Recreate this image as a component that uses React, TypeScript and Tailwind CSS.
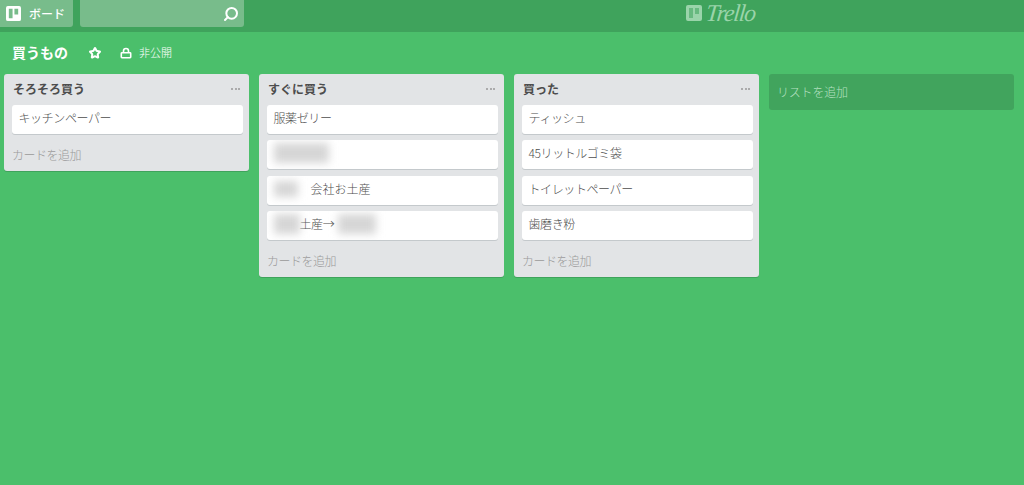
import React from 'react';
import { Search, Star } from 'lucide-react';

const font = "font-['Noto_Sans_CJK_JP','Noto_Sans',sans-serif]";

function Smudge({ className }: { className: string }) {
  return <span className={`inline-block bg-[#d6d6d6] blur-[4px] ${className}`} />;
}

function Card({ children }: { children: React.ReactNode }) {
  return (
    <div className="flex h-[29px] items-center overflow-hidden rounded-[3px] bg-white pb-[3px] pl-[7px] text-[12px] font-light tracking-[-0.4px] text-[#4d4d4d] shadow-[0_1px_0_#c4c9cc]">
      {children}
    </div>
  );
}

function TrelloMark({ className, panels }: { className: string; panels?: boolean }) {
  return (
    <svg viewBox="0 0 16 16" className={className}>
      {panels && <path fill="currentColor" opacity="0.45" d="M3 3h4v10H3zM9 3h4v6H9z" />}
      <path
        fillRule="evenodd"
        fill="currentColor"
        d="M2 0h12a2 2 0 0 1 2 2v12a2 2 0 0 1-2 2H2a2 2 0 0 1-2-2V2a2 2 0 0 1 2-2zm1 3v10h4V3H3zm6 0v6h4V3H9z"
      />
    </svg>
  );
}

function LockIcon() {
  return (
    <svg viewBox="0 0 12 12" className="ml-[19px] h-[12px] w-[12px]">
      <path fill="none" stroke="currentColor" strokeWidth="1.6" d="M3.5 5.5V4a2.5 2.5 0 0 1 5 0v1.5" />
      <rect x="1.3" y="5.8" width="9.4" height="4.9" rx="0.6" fill="none" stroke="currentColor" strokeWidth="1.6" />
    </svg>
  );
}

function List({ title, cards }: { title: string; cards: React.ReactNode[] }) {
  return (
    <div className="w-[245px] shrink-0 rounded-[3px] bg-[#e2e4e6] pb-[4px] shadow-[0_1px_0_#3fa35c]">
      <div className="flex h-[31px] items-center justify-between pb-[2px] pl-[9px] pr-[9px]">
        <span className="text-[12px] font-bold text-[#4d4d4d]">{title}</span>
        <span className="flex gap-[1.5px]">
          <i className="h-[2px] w-[2px] rounded-full bg-[#999]" />
          <i className="h-[2px] w-[2px] rounded-full bg-[#999]" />
          <i className="h-[2px] w-[2px] rounded-full bg-[#999]" />
        </span>
      </div>
      <div className="flex flex-col gap-[6.33px] pl-[7.5px] pr-[6.5px]">
        {cards.map((c, i) => (
          <Card key={i}>{c}</Card>
        ))}
      </div>
      <div className="mt-[9px] flex h-[24px] items-center pl-[8px] text-[12px] font-light tracking-[-0.5px] text-[#9a9a9a]">
        カードを追加
      </div>
    </div>
  );
}

export default function App() {
  return (
    <div className={`flex h-screen flex-col overflow-hidden bg-[#4bbf6b] ${font}`}>
      <header className="relative flex h-[32px] shrink-0 items-start bg-[#3fa35c]">
        <button className="flex h-[27px] w-[73px] items-center gap-[8px] rounded-br-[3px] bg-[#78bc8b] pl-[6px] text-[12px] font-medium text-white">
          <TrelloMark className="h-[15px] w-[15px] text-white" />
          ボード
        </button>
        <div className="ml-[7px] flex h-[27px] w-[164px] items-center justify-end rounded-b-[3px] bg-[#78bc8b] pr-[5px]">
          <Search className="h-[16px] w-[16px] -scale-x-100 text-white" strokeWidth={3} />
        </div>
        <div className="absolute left-[686px] top-0 flex h-[25px] items-center gap-[4px] text-[#9ad4aa]">
          <TrelloMark className="h-[16px] w-[16px]" panels />
          <span className="-skew-x-6 font-['Liberation_Serif',serif] text-[24px] italic leading-none tracking-[-1.2px]">
            Trello
          </span>
        </div>
      </header>

      <div className="flex h-[41px] shrink-0 items-center pl-[12px] text-white">
        <span className="text-[14px] font-bold">買うもの</span>
        <Star className="ml-[21px] h-[12px] w-[12px]" strokeWidth={4} />
        <LockIcon />
        <span className="ml-[7px] text-[11px] font-light">非公開</span>
      </div>

      <div className="mt-[1px] flex items-start gap-[10px] pl-[4px]">
        <List title="そろそろ買う" cards={['キッチンペーパー']} />
        <List
          title="すぐに買う"
          cards={[
            '服薬ゼリー',
            <Smudge className="h-[20px] w-[55px]" />,
            <>
              <Smudge className="h-[16px] w-[24px]" />
              <span className="ml-[13px] tracking-normal">会社お土産</span>
            </>,
            <>
              <Smudge className="h-[20px] w-[26px]" />
              <span>土産→</span>
              <Smudge className="ml-[4px] h-[20px] w-[38px]" />
            </>,
          ]}
        />
        <List title="買った" cards={['ティッシュ', '45リットルゴミ袋', 'トイレットペーパー', '歯磨き粉']} />
        <div className="flex h-[36px] w-[245px] shrink-0 items-center rounded-[3px] bg-[#41a45d] pl-[8px] text-[12px] font-light tracking-[-0.2px] text-[#b5e0c0]">
          リストを追加
        </div>
      </div>
    </div>
  );
}
